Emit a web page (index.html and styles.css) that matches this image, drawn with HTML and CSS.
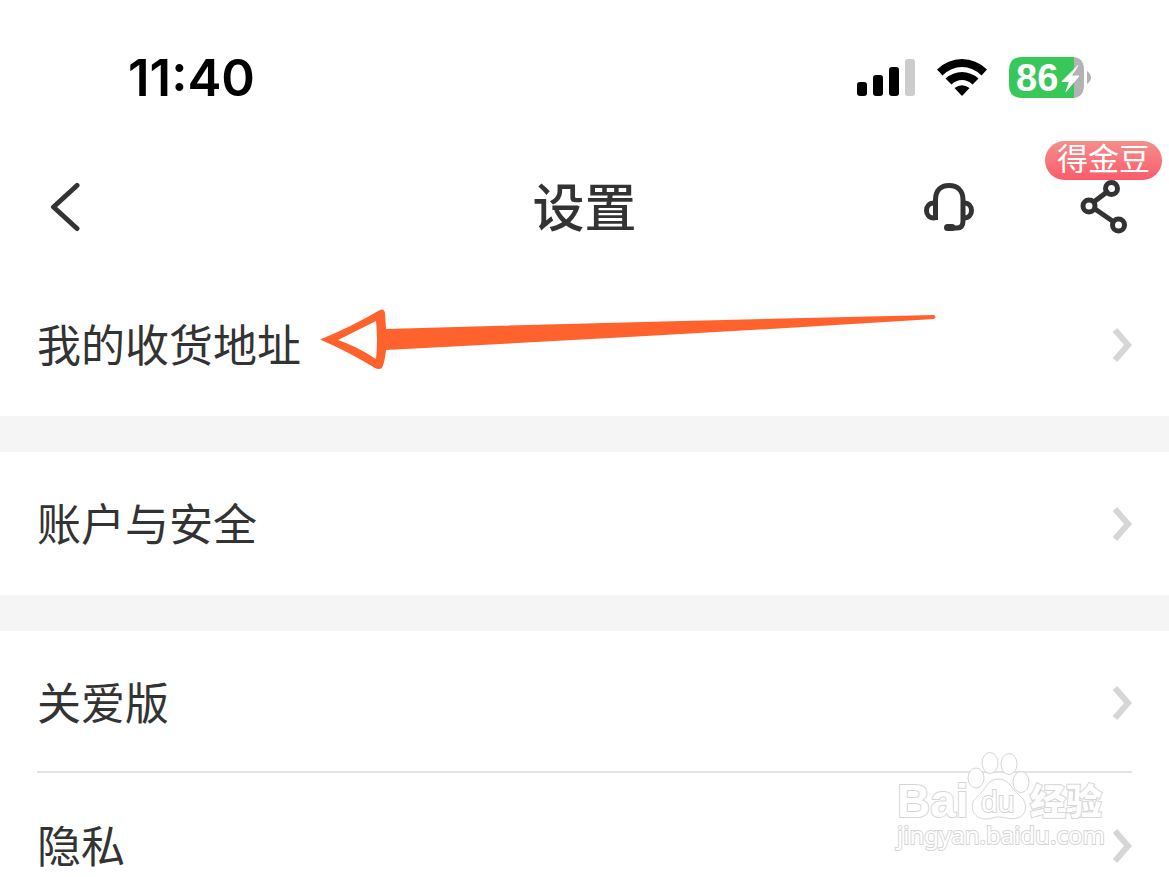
FILE: index.html
```
<!DOCTYPE html>
<html lang="zh-CN">
<head>
  <meta charset="utf-8">
  <meta name="viewport" content="width=device-width, initial-scale=1">
  <title>设置</title>
  <link rel="stylesheet" href="styles.css">
</head>
<body>
<div class="status-bar">
  <div class="clock">11:40</div>
  <div class="indicators">
    <svg class="signal" width="58" height="38" viewBox="0 0 58 38">
      <rect x="0" y="23" width="10" height="14" rx="3"/>
      <rect x="16" y="16" width="10" height="21" rx="3"/>
      <rect x="32" y="8" width="10" height="29" rx="3"/>
      <rect class="off" x="48" y="0" width="10" height="37" rx="3"/>
    </svg>
    <svg class="wifi" width="50" height="38" viewBox="0 0 50 38">
      <path d="M0 10.500Q11 0 25 0T50 10.500L44.500 16.500Q36 8 25 8T5.500 16.500Z"/>
      <path d="M8.500 19.500Q16 13 25 13T41.500 19.500L35.500 25.500Q31 21 25 21T14.500 25.500Z"/>
      <path d="M17.500 29Q25 23.500 32.500 29L26 36Q25 37.500 24 36Z"/>
    </svg>
    <svg class="battery" width="82" height="42" viewBox="0 0 82 42">
      <path class="rest" d="M60 0H63Q75 0 75 13V28Q75 41 63 41H60Z"/>
      <path class="level" d="M65 0H13Q0 0 0 13V28Q0 41 13 41H65Z"/>
      <path class="rest" d="M78 14Q82 17 82 20.500T78 27Z"/>
      <text x="7" y="34">86</text>
      <path class="bolt" d="M69 8.500L53 24.500H60.500L57 34.500L70 19H62.500Z"/>
    </svg>
  </div>
</div>

<header class="nav-bar">
  <button class="icon-button back" aria-label="返回">
    <svg width="32" height="50" viewBox="0 0 32 50">
      <path d="M28 3.500L4.500 25L28 46.500"/>
    </svg>
  </button>
  <h1>设置</h1>
  <div class="nav-actions">
    <button class="icon-button" aria-label="客服">
      <svg width="50" height="50" viewBox="0 0 50 50">
        <path class="band" d="M11.500 38V18C11.500 8 17 3.500 25 3.500S39 8 39 18V39Q39 46 33 46H24"/>
        <path d="M10 21C0 21 0 36 10 36M40 21C50 21 50 36 40 36"/>
        <path class="mic" d="M23.500 45.500H28"/>
      </svg>
    </button>
    <button class="icon-button share" aria-label="分享">
      <svg width="48" height="54" viewBox="0 0 48 54">
        <path d="M15 21L27 12M15 29L31 40"/>
        <circle cx="31.500" cy="8.500" r="6"/>
        <circle cx="9" cy="26" r="6"/>
        <circle cx="38.500" cy="45" r="6"/>
      </svg>
      <span class="badge">得金豆</span>
    </button>
  </div>
</header>

<main class="settings">
  <section class="group">
    <a class="row" href="#address">
      <span class="label">我的收货地址</span>
      <svg class="chevron" width="20" height="36" viewBox="0 0 20 36"><path d="M3 3L16 18L3 33"/></svg>
    </a>
    <svg class="pointer" width="616" height="62" viewBox="0 0 616 62">
      <path fill-rule="evenodd" d="M0 30.500Q31 18 60 1Q64 -1 65 4L66 20Q340 12 614 6Q617 8 614 10Q340 27 66 41Q65 52 62 59Q59 61 55 59Q29 43 0 30.500ZM18 31Q36 37 56 50Q58 31 56 12Q36 22 18 31Z"/>
    </svg>
  </section>
  <section class="group">
    <a class="row" href="#account">
      <span class="label">账户与安全</span>
      <svg class="chevron" width="20" height="36" viewBox="0 0 20 36"><path d="M3 3L16 18L3 33"/></svg>
    </a>
  </section>
  <section class="group">
    <a class="row" href="#care">
      <span class="label">关爱版</span>
      <svg class="chevron" width="20" height="36" viewBox="0 0 20 36"><path d="M3 3L16 18L3 33"/></svg>
    </a>
    <a class="row" href="#privacy">
      <span class="label">隐私</span>
      <svg class="chevron" width="20" height="36" viewBox="0 0 20 36"><path d="M3 3L16 18L3 33"/></svg>
    </a>
  </section>
</main>

<svg class="watermark" width="216" height="106" viewBox="0 0 216 106">
  <text class="brand" x="4" y="66">Bai</text>
  <ellipse cx="83" cy="27" rx="8" ry="10"/>
  <ellipse cx="97" cy="12" rx="8" ry="10.500"/>
  <ellipse cx="116" cy="13" rx="8" ry="10.500"/>
  <ellipse cx="128" cy="31" rx="8" ry="10.500"/>
  <path d="M105 28C94 28 93 39 84 46C76 52 78 67 92 68C99 68 100 66 106 66S117 69 124 67C135 65 135 50 126 44C118 38 117 28 105 28Z"/>
  <text class="du" x="88" y="61">du</text>
  <text class="cn" x="137" y="64">经验</text>
  <text class="site" x="4" y="93">jingyan.baidu.com</text>
</svg>
</body>
</html>
```
FILE: styles.css
```
* {
  box-sizing: border-box;
}

body {
  position: relative;
  height: 100vh;
  margin: 0;
  overflow: hidden;
  background: #fff;
  color: #333;
  font-family: "Noto Sans CJK SC", sans-serif;
}

svg {
  display: block;
  flex: none;
}

.status-bar {
  display: flex;
  align-items: center;
  justify-content: space-between;
  height: 141px;
  padding: 15px 78px 0 128px;
}

.clock {
  color: #000;
  font: 600 51px/60px Inter, sans-serif;
}

.indicators {
  display: flex;
  align-items: center;
  gap: 22px;
}

.signal .off {
  fill: #ccc;
}

.battery .level {
  fill: #38c759;
}

.battery .rest {
  fill: #b3b3b3;
}

.battery .bolt {
  fill: #fff;
  stroke: #fff;
  stroke-linejoin: round;
}

.battery text {
  fill: #fff;
  font: bold 38px "Liberation Sans", sans-serif;
}

.nav-bar {
  display: grid;
  grid-template-columns: 1fr auto 1fr;
  align-items: center;
  height: 132px;
  padding: 0 41px;
}

h1 {
  margin: 0;
  padding-bottom: 4px;
  font-size: 52px;
  line-height: 72px;
  font-weight: 500;
}

.nav-actions {
  display: flex;
  align-items: center;
  justify-content: flex-end;
  gap: 106px;
}

.icon-button {
  position: relative;
  justify-self: start;
  padding: 0;
  border: 0;
  background: none;
  color: inherit;
  cursor: pointer;
}

.back {
  padding-left: 8px;
}

.icon-button svg {
  fill: none;
  stroke: #333;
  stroke-width: 5;
  stroke-linecap: round;
  stroke-linejoin: round;
}

.icon-button .band {
  stroke-linecap: butt;
}

.icon-button .mic {
  stroke-width: 7;
}

.badge {
  position: absolute;
  right: -34px;
  bottom: 54px;
  width: 117px;
  height: 39px;
  border-radius: 20px;
  background: linear-gradient(#f48f8a, #fb5b6c);
  color: #fff;
  font: 31px/32px "Noto Sans CJK SC", sans-serif;
  text-align: center;
}

.settings {
  display: flex;
  flex-direction: column;
  gap: 36px;
  background: #f5f5f5;
}

.group {
  position: relative;
  padding: 0 37px;
  background: #fff;
}

.row {
  display: flex;
  align-items: center;
  justify-content: space-between;
  height: 143px;
  color: #333;
  font-size: 44px;
  line-height: 64px;
  text-decoration: none;
}

.row + .row {
  height: 148px;
  margin-top: -3px;
  border-top: 2px solid #e3e3e3;
}

.label {
  padding-bottom: 4px;
}

.chevron {
  fill: none;
  stroke: #d6d6d6;
  stroke-width: 6;
}

.pointer {
  position: absolute;
  top: 36px;
  left: 320px;
  fill: #ff622d;
}

.watermark {
  position: absolute;
  right: 60px;
  bottom: 20px;
  fill: #fff;
  stroke: #d6d6d6;
  stroke-width: 1;
}

.watermark text {
  paint-order: stroke;
  stroke-width: 2;
}

.watermark .brand {
  font: bold 46px "Liberation Sans", sans-serif;
}

.watermark .du {
  font: 30px "Liberation Sans", sans-serif;
}

.watermark .cn {
  font: 900 36px "Noto Sans CJK SC", sans-serif;
}

.watermark .site {
  font: 24px "Noto Sans", sans-serif;
}
```
